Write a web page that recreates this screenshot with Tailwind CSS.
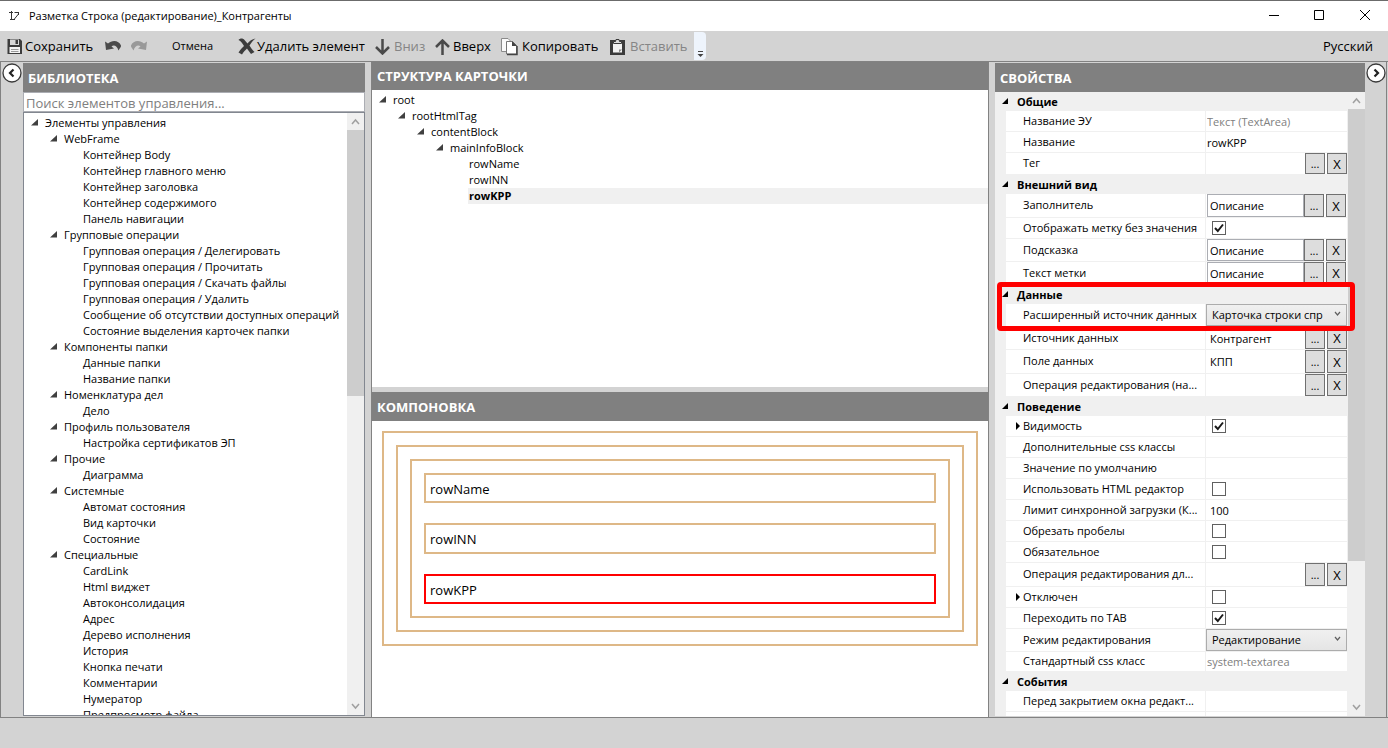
<!DOCTYPE html>
<html lang="ru">
<head>
<meta charset="utf-8">
<title>Разметка Строка (редактирование)_Контрагенты</title>
<script src="https://cdn.jsdelivr.net/npm/@tailwindcss/browser@4"></script>
</head>
<body class="flex h-screen flex-col overflow-hidden border-t border-[#6b6b6b] bg-[#d3d3d3] font-['Open_Sans','Noto_Sans',sans-serif] text-[11px] text-black">

<header class="flex h-[30px] shrink-0 items-center bg-white">
  <svg class="ml-2 size-3" viewBox="0 0 12 12" fill="none" stroke="#333"><path d="M3.500 1v9M1 2.500h4M2 9.500h5" stroke-width="1"/><path d="M6 9.500L10.500 4M6.500 2.500h4.500M10.500 2v3" stroke-width="1"/></svg>
  <h1 class="ml-[9px] flex-1">Разметка Строка (редактирование)_Контрагенты</h1>
  <button class="flex w-[45px] justify-center" aria-label="Свернуть"><svg class="size-3" viewBox="0 0 12 12" stroke="#000"><path d="M1 5.500h10"/></svg></button>
  <button class="flex w-[45px] justify-center" aria-label="Развернуть"><svg class="size-3" viewBox="0 0 12 12" fill="none" stroke="#000"><path d="M1.500.500h9v9h-9z"/></svg></button>
  <button class="flex w-[47px] justify-center" aria-label="Закрыть"><svg class="size-3" viewBox="0 0 12 12" stroke="#000"><path d="M1 0l10 10M11 0L1 10"/></svg></button>
</header>

<nav class="flex h-[30px] shrink-0 items-center text-[13px] whitespace-nowrap">
  <button class="ml-[6px] flex w-[98px] items-center gap-[2px] pt-px">
    <svg class="size-[17px]" viewBox="0 0 17 17"><path d="M1.500 1H14l2 2v13H1.500z" fill="#3c3c3c"/><path d="M4 1.500h9V7H4z" fill="#d8d8d8"/><path d="M9.500 2H12v4H9.500z" fill="#3c3c3c"/><path d="M3.500 9H14v6H3.500z" fill="#f4f4f4"/><path d="M5 11.500h7.500M5 13.500h7.500" stroke="#999"/></svg>Сохранить</button>
  <button class="flex w-[26px] items-center" aria-label="Отменить действие"><svg class="h-4 w-[18px]" viewBox="0 0 18 16"><path d="M1 3.500L2 12l8-1.500L7.500 8.500C9.500 6.500 13 7.500 14.500 12.500 15.500 10 17.500 9 17 7.500 15 2 8 1.500 4 5.500z" fill="#4b4b4b"/></svg></button>
  <button class="flex w-[42px] items-center" aria-label="Повторить действие"><svg class="h-4 w-[18px]" viewBox="0 0 18 16"><path d="M17 3.500L16 12l-8-1.500 2.500-2C8.500 6.500 5 7.500 3.500 12.500 2.500 10 .5 9 1 7.500 3 2 10 1.500 14 5.500z" fill="#999"/></svg></button>
  <button class="w-[66px] pt-px text-left text-[11px]">Отмена</button>
  <button class="flex w-[137px] items-center gap-px pt-px">
    <svg class="h-[17px] w-[18px]" viewBox="0 0 18 17"><path d="M.5 2C2 0 5 0 6.500 2L9.500 5.500C11.500 3 14 1 17.500.500c-2.500 2-4.500 4.500-6 7 1.500 2.500 3 4.500 5 6.500l-3.500 2c-1.500-2-3-4-4-5.500-2 2-3.500 3.500-5 6L.5 14.500C2 12 4 10 6 8 4.500 5.500 3 3 .5 2z" fill="#3d3d3d"/></svg>Удалить элемент</button>
  <button class="flex w-[60px] items-center gap-[3px] pt-px text-[#858585]" disabled>
    <svg class="size-4" viewBox="0 0 16 16" fill="none" stroke="#4a4a4a" stroke-width="2.500"><path d="M7.500 0v14M1 8l6.500 6.500L14 8"/></svg>Вниз</button>
  <button class="flex w-[66px] items-center gap-[2px] pt-px">
    <svg class="size-4" viewBox="0 0 16 16" fill="none" stroke="#4a4a4a" stroke-width="2.500"><path d="M7.500 16V2M1 8l6.500-6.500L14 8"/></svg>Вверх</button>
  <button class="flex w-[108px] items-center gap-[4px] pt-px">
    <svg class="h-[18px] w-[17px]" viewBox="0 0 17 18"><path d="M.500.500H7l2.500 2.500v10.500H.500z" fill="#fafafa" stroke="#8b8b8b"/><path d="M5.500 3.500h6l4 4v8.500h-10z" fill="#fff" stroke="#777"/><path d="M11 3l5 5h-5z" fill="#444"/><path d="M16 8v8.500H6" fill="none" stroke="#444" stroke-width="1.500"/></svg>Копировать</button>
  <button class="flex w-[85px] items-center gap-[4px] pt-px text-[#858585]" disabled>
    <svg class="h-[18px] w-[17px]" viewBox="0 0 17 18"><path d="M1 2h15v15H1z" fill="#3b3b3b"/><path d="M4 5h9v9.500H4z" fill="#f3f3f3"/><path d="M4.500 5.500V3.500h2L7 1.500h3l.500 2h2v2z" fill="#ddd" stroke="#3b3b3b"/><path d="M10 14.500v-3h3z" fill="#888"/></svg>Вставить</button>
  <button class="flex h-7 w-[12px] items-end justify-center rounded-r-sm bg-[#eef4fc] pb-[2px]" aria-label="Ещё"><svg class="h-2 w-[7px]" viewBox="0 0 7 8"><path d="M1 1.500h5" stroke="#444"/><path d="M.5 4h6l-3 3z" fill="#444"/></svg></button>
  <span class="mr-[15px] ml-auto pt-px">Русский</span>
</nav>

<main class="flex min-h-0 flex-1 border-y border-l border-[#828282]">
  <button class="mt-px flex size-[22px] shrink-0 justify-center" aria-label="Свернуть библиотеку"><svg class="size-5" viewBox="0 0 20 20"><circle cx="10" cy="10" r="9" fill="#fff" stroke="#3a3a3a" stroke-width="1.300"/><path d="M11.500 6.500L8 10l3.500 3.500" fill="none" stroke="#222" stroke-width="2.200"/></svg></button>

  <section class="mt-px mb-px flex w-[342px] shrink-0 flex-col">
    <h2 class="h-[29px] bg-[#808080] px-[5px] text-[13px] leading-[30px] font-bold text-white">БИБЛИОТЕКА</h2>
    <input type="text" aria-label="Поиск элементов управления" placeholder="Поиск элементов управления..." class="h-5 w-full border border-[#abadb3] bg-white px-[2px] pt-[2px] text-[13px] placeholder:text-[#808080]">
    <div class="flex min-h-0 flex-1 border border-[#828790] bg-white">
      <div id="library" role="tree" class="min-w-0 flex-1 overflow-hidden pt-[2px] pl-[6px]"></div>
      <div class="flex w-[17px] shrink-0 flex-col bg-[#f0f0f0]">
        <svg class="h-[17px] w-full" viewBox="0 0 17 17" fill="none" stroke="#a0a0a0" stroke-width="1.500"><path d="M5 11l3.500-4L12 11"/></svg>
        <div class="h-[266px] bg-[#cdcdcd]"></div>
        <svg class="mt-auto h-[17px] w-full" viewBox="0 0 17 17" fill="none" stroke="#a0a0a0" stroke-width="1.500"><path d="M5 6l3.500 4L12 6"/></svg>
      </div>
    </div>
  </section>

  <div class="ml-[6px] flex min-w-0 flex-1 flex-col border-x border-[#828282]">
    <section class="flex h-[325px] shrink-0 flex-col bg-white">
      <h2 class="h-7 bg-[#808080] px-[5px] text-[13px] leading-7 font-bold text-white">СТРУКТУРА КАРТОЧКИ</h2>
      <div id="structure" role="tree" class="pt-[2px] pl-[6px]"></div>
    </section>
    <section class="mt-[5px] min-h-0 flex-1 bg-white">
      <h2 class="h-[29px] bg-[#808080] px-[5px] text-[13px] leading-[30px] font-bold text-white">КОМПОНОВКА</h2>
      <div class="m-[10px] border-2 border-[#deb887] p-3 text-[13px]">
        <div class="border-2 border-[#deb887] p-3">
          <div class="flex flex-col gap-5 border-2 border-[#deb887] p-3">
            <div class="h-[30px] border-2 border-[#deb887] px-[4px] leading-[28px]">rowName</div>
            <div class="h-[31px] border-2 border-[#deb887] px-[4px] leading-[28px]">rowINN</div>
            <div class="h-[30px] border-2 border-[#ff0000] px-[4px] leading-[28px]">rowKPP</div>
          </div>
        </div>
      </div>
    </section>
  </div>

  <section class="mt-px mb-px ml-[6px] flex w-[370px] shrink-0 flex-col">
    <h2 class="h-[29px] shrink-0 bg-[#808080] px-[5px] text-[13px] leading-[30px] font-bold text-white">СВОЙСТВА</h2>
    <div class="flex min-h-0 flex-1 overflow-hidden bg-[#f0f0f0]">
      <div id="properties" class="min-w-0 flex-1"></div>
      <div class="flex w-[17px] shrink-0 flex-col">
        <svg class="h-[17px] w-full" viewBox="0 0 17 17" fill="none" stroke="#a0a0a0" stroke-width="1.500"><path d="M5 11l3.500-4L12 11"/></svg>
        <div class="h-[452px] bg-[#cdcdcd]"></div>
        <svg class="mt-auto h-[17px] w-full" viewBox="0 0 17 17" fill="none" stroke="#a0a0a0" stroke-width="1.500"><path d="M5 6l3.500 4L12 6"/></svg>
      </div>
    </div>
  </section>

  <div class="flex w-[22px] shrink-0 justify-center border-r border-[#828282] pt-px">
    <button class="size-5" aria-label="Свернуть свойства"><svg class="size-5" viewBox="0 0 20 20"><circle cx="10" cy="10" r="9" fill="#fff" stroke="#3a3a3a" stroke-width="1.300"/><path d="M8.500 6.500L12 10l-3.500 3.500" fill="none" stroke="#222" stroke-width="2.200"/></svg></button>
  </div>
  <div class="w-px shrink-0"></div>
</main>
<footer class="h-[30px] shrink-0"></footer>

<script>
// Trees: [level, caption, kind]; kind "g" is an expanded group, "s" the selected item
const pad = ['pl-0', 'pl-[19px]', 'pl-[38px]', 'pl-[57px]', 'pl-[76px]'];
const arrow = '<svg class="ml-px mr-px mb-px size-[7px] shrink-0" viewBox="0 0 7 7"><path d="M7 0v6.500H0z" fill="#404040"/></svg>';
function tree(id, items) {
  document.getElementById(id).innerHTML = items.map(([level, text, kind]) =>
    `<div role="treeitem" class="flex h-4 items-center whitespace-nowrap ${pad[level]}">` +
    (kind === 'g' ? arrow : '<span class="w-[9px] shrink-0"></span>') +
    (kind === 's'
      ? `<span class="ml-[5px] flex-1 bg-[#f0f0f0] pl-px leading-4 font-bold">${text}</span>`
      : `<span class="ml-[6px] leading-4">${text}</span>`) + '</div>').join('');
}
tree('library', [
  [0, 'Элементы управления', 'g'],
  [1, 'WebFrame', 'g'],
  [2, 'Контейнер Body'], [2, 'Контейнер главного меню'], [2, 'Контейнер заголовка'], [2, 'Контейнер содержимого'], [2, 'Панель навигации'],
  [1, 'Групповые операции', 'g'],
  [2, 'Групповая операция / Делегировать'], [2, 'Групповая операция / Прочитать'], [2, 'Групповая операция / Скачать файлы'],
  [2, 'Групповая операция / Удалить'], [2, 'Сообщение об отсутствии доступных операций'], [2, 'Состояние выделения карточек папки'],
  [1, 'Компоненты папки', 'g'], [2, 'Данные папки'], [2, 'Название папки'],
  [1, 'Номенклатура дел', 'g'], [2, 'Дело'],
  [1, 'Профиль пользователя', 'g'], [2, 'Настройка сертификатов ЭП'],
  [1, 'Прочие', 'g'], [2, 'Диаграмма'],
  [1, 'Системные', 'g'], [2, 'Автомат состояния'], [2, 'Вид карточки'], [2, 'Состояние'],
  [1, 'Специальные', 'g'], [2, 'CardLink'], [2, 'Html виджет'], [2, 'Автоконсолидация'], [2, 'Адрес'], [2, 'Дерево исполнения'],
  [2, 'История'], [2, 'Кнопка печати'], [2, 'Комментарии'], [2, 'Нумератор'], [2, 'Предпросмотр файла'],
]);
tree('structure', [
  [0, 'root', 'g'], [1, 'rootHtmlTag', 'g'], [2, 'contentBlock', 'g'], [3, 'mainInfoBlock', 'g'],
  [4, 'rowName'], [4, 'rowINN'], [4, 'rowKPP', 's'],
]);

// Properties: {title, rows: [caption, height class, control, value, expandable]}
const XS = 'h-[20px]', S = 'h-[21px]', T = 'h-[22px]', M = 'h-[23px]', L = 'h-[24px]';
const buttons = (name) =>
  `<button class="h-full w-5 shrink-0 border border-[#707070] bg-[#dddddd] leading-none" aria-label="${name}: выбрать">...</button>` +
  `<button class="ml-[2px] h-full w-5 shrink-0 border border-[#707070] bg-[#dddddd] pt-px text-[13px] leading-none" aria-label="${name}: очистить">X</button>`;
const controls = {
  text: (id, v) => `<input id="${id}" type="text" value="${v}" class="h-full w-full pl-[4px]">`,
  name: (id, v) => `<input id="${id}" type="text" value="${v}" class="h-full w-full pl-px">`,
  gray: (id, v) => `<input id="${id}" type="text" readonly value="${v}" class="h-full w-full pl-px text-[#808080]">`,
  pick: (id, v, n) => `<input id="${id}" type="text" value="${v}" class="h-full min-w-0 flex-1 pl-[4px]">${buttons(n)}`,
  box: (id, v, n) => `<input id="${id}" type="text" value="${v}" class="ml-px h-full min-w-0 flex-1 border border-[#abadb3] pl-[2px]">${buttons(n)}<span class="w-px"></span>`,
  check: (id, v) => `<span class="relative ml-[6px] flex size-[14px]"><input id="${id}" type="checkbox" ${v ? 'checked' : ''} class="peer size-[14px] appearance-none border border-[#606060] bg-white"><svg class="pointer-events-none absolute inset-0 hidden size-[14px] peer-checked:block" viewBox="0 0 14 14" fill="none" stroke="#1a1a1a" stroke-width="2"><path d="M3 7l2.800 3L11 3.500"/></svg></span>`,
  select: (id, v) => `<span class="relative flex h-full w-full"><select id="${id}" class="h-full w-full appearance-none border border-[#acacac] bg-linear-to-b from-[#f0f0f0] to-[#e5e5e5] pr-5 pl-[5px]"><option>${v}</option></select><svg class="pointer-events-none absolute top-[7px] right-[6px] h-[6px] w-[7px]" viewBox="0 0 7 6" fill="none" stroke="#606060" stroke-width="1.200"><path d="M1 1l2.500 3L6 1"/></svg></span>`,
};
const groups = [
  { title: 'Общие', rows: [
    ['Название ЭУ', S, 'gray', 'Текст (TextArea)'], ['Название', S, 'name', 'rowKPP'], ['Тег', T, 'pick', '']] },
  { title: 'Внешний вид', rows: [
    ['Заполнитель', L, 'box', 'Описание'], ['Отображать метку без значения', S, 'check', true],
    ['Подсказка', M, 'box', 'Описание'], ['Текст метки', M, 'box', 'Описание']] },
  { title: 'Данные', mark: true, rows: [
    ['Расширенный источник данных', M, 'select', 'Карточка строки спр'], ['Источник данных', M, 'pick', 'Контрагент'],
    ['Поле данных', L, 'pick', 'КПП'], ['Операция редактирования (на...', M, 'pick', '']] },
  { title: 'Поведение', rows: [
    ['Видимость', S, 'check', true, true], ['Дополнительные css классы', S, 'text', ''], ['Значение по умолчанию', S, 'text', ''],
    ['Использовать HTML редактор', S, 'check', false], ['Лимит синхронной загрузки (К...', S, 'text', '100'],
    ['Обрезать пробелы', S, 'check', false], ['Обязательное', S, 'check', false],
    ['Операция редактирования дл...', L, 'pick', ''], ['Отключен', S, 'check', false, true],
    ['Переходить по TAB', S, 'check', true], ['Режим редактирования', M, 'select', 'Редактирование'],
    ['Стандартный css класс', XS, 'gray', 'system-textarea']] },
  { title: 'События', rows: [['Перед закрытием окна редакт...', S, 'text', ''], ['', S, 'text', '']] },
];
let n = 0;
document.getElementById('properties').innerHTML = groups.map((g) =>
  `<section class="relative">
    <h3 class="flex h-[19px] items-center pt-[2px] pl-[7px] font-bold"><svg class="mr-[9px] mb-1 size-[6px]" viewBox="0 0 6 6"><path d="M6 0v6H0z"/></svg>${g.title}</h3>` +
  g.rows.map(([caption, height, kind, value, expandable]) => {
    const id = 'p' + n++;
    return `<div class="flex ${height} ml-[11px] mr-px border-b border-[#f0f0f0] bg-white">
      <span class="flex w-[17px] shrink-0 items-center justify-end pr-[3px]">${expandable ? '<svg class="h-[8px] w-[4px]" viewBox="0 0 4 8"><path d="M0 0l4 4-4 4z"/></svg>' : ''}</span>
      <label for="${id}" class="flex w-[182px] shrink-0 items-center whitespace-nowrap">${caption}</label>
      <div class="flex min-w-0 flex-1 items-center border-l border-[#f0f0f0]">${controls[kind](id, value, caption)}</div>
    </div>`;
  }).join('') +
  (g.mark ? '<div class="pointer-events-none absolute -top-[3px] left-[2px] -right-[7px] z-10 h-[49px] rounded-[4px] border-[5px] border-[#ff0000]"></div>' : '') +
  '</section>').join('');
</script>
</body>
</html>
